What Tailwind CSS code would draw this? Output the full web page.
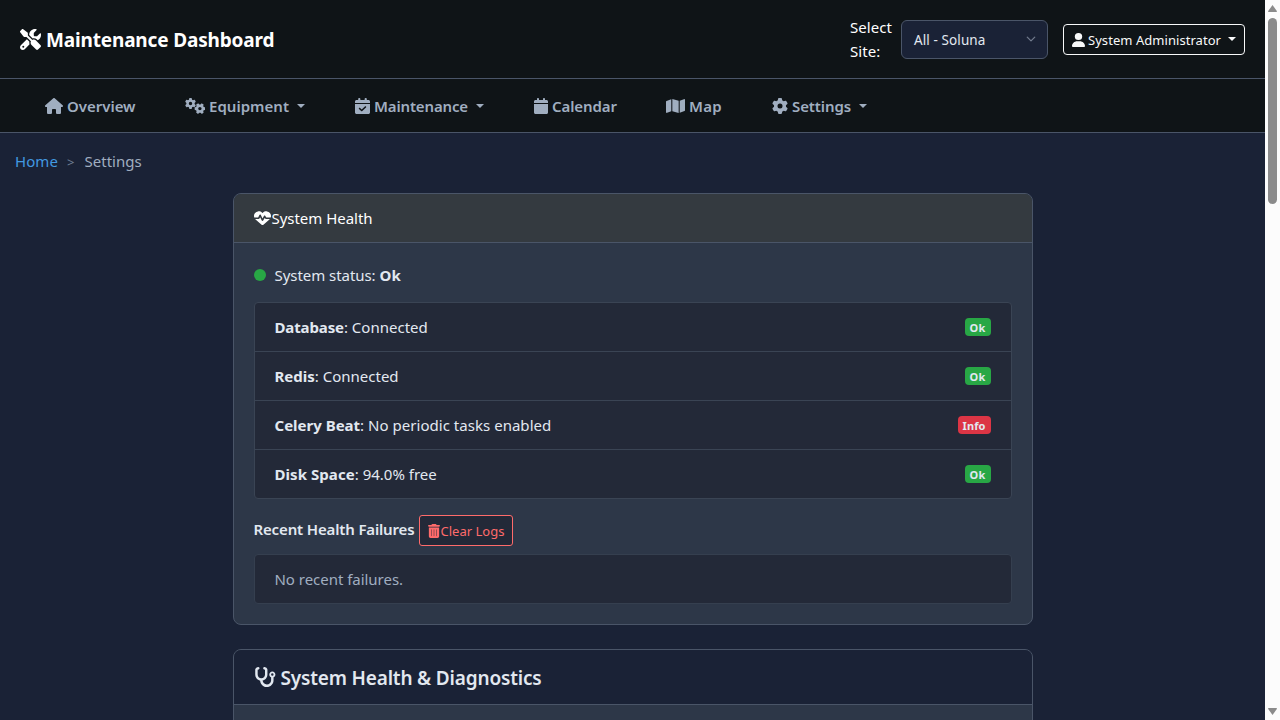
<!DOCTYPE html>
<html lang="en">
<head>
<meta charset="utf-8">
<title>Maintenance Dashboard</title>
<script src="https://cdn.jsdelivr.net/npm/@tailwindcss/browser@4"></script>
</head>
<body class="h-screen overflow-hidden bg-[#1a2236] font-['Noto_Sans','Open_Sans',sans-serif] text-[15px] leading-6 text-[#e2e8f0]">
<svg class="hidden">
  <symbol id="gear" viewBox="0 0 512 512"><path fill-rule="evenodd" d="M495.9 166.6c3.2 8.7 .5 18.4-6.4 24.6l-43.3 39.4c1.1 8.3 1.7 16.8 1.7 25.4s-.6 17.1-1.7 25.4l43.3 39.4c6.9 6.2 9.6 15.9 6.4 24.6c-4.4 11.9-9.7 23.3-15.8 34.3l-4.7 8.1c-6.6 11-14 21.4-22.1 31.2c-5.9 7.2-15.7 9.6-24.5 6.8l-55.7-17.7c-13.4 10.3-28.2 18.9-44 25.4l-12.5 57.1c-2 9.1-9 16.3-18.2 17.8c-13.8 2.3-28 3.5-42.5 3.5s-28.7-1.2-42.5-3.5c-9.2-1.5-16.2-8.7-18.2-17.8l-12.5-57.1c-15.8-6.5-30.6-15.1-44-25.4L83.1 425.9c-8.8 2.8-18.6 .3-24.5-6.8c-8.1-9.8-15.5-20.2-22.1-31.2l-4.7-8.1c-6.1-11-11.4-22.4-15.8-34.3c-3.2-8.7-.5-18.4 6.4-24.6l43.3-39.4C64.6 273.1 64 264.6 64 256s.6-17.1 1.7-25.4L22.4 191.2c-6.9-6.2-9.6-15.9-6.4-24.6c4.4-11.9 9.7-23.3 15.8-34.3l4.7-8.1c6.6-11 14-21.4 22.1-31.2c5.9-7.2 15.7-9.6 24.5-6.8l55.7 17.7c13.4-10.3 28.2-18.9 44-25.4l12.5-57.1c2-9.1 9-16.3 18.2-17.8C227.3 1.2 241.5 0 256 0s28.7 1.2 42.5 3.5c9.2 1.5 16.2 8.7 18.2 17.8l12.5 57.1c15.8 6.5 30.6 15.1 44 25.4l55.7-17.7c8.8-2.8 18.6-.3 24.5 6.8c8.1 9.8 15.5 20.2 22.1 31.2l4.7 8.1c6.1 11 11.4 22.4 15.8 34.3zM256 336a80 80 0 1 0 0-160 80 80 0 1 0 0 160z"/></symbol>
</svg>
<div class="flex h-full">
  <div class="min-w-0 flex-1 overflow-hidden">
    <header class="flex h-[79px] items-center justify-between border-b border-[#4a5568] bg-[#0f1417] pr-5 pl-5">
      <h1 class="flex items-center gap-[5px] text-[19px] font-bold tracking-[-0.16px] text-white">
        <svg class="size-[21px]" viewBox="0 0 512 512" fill="currentColor"><path fill-rule="evenodd" d="M78.6 5C69.1-2.4 55.6-1.5 47 7L7 47c-8.5 8.5-9.4 22-2.1 31.6l80 104c4.5 5.9 11.6 9.4 19 9.4h54.1l109 109c-14.7 29-10 65.4 14.3 89.6l112 112c12.5 12.5 32.8 12.5 45.3 0l64-64c12.5-12.5 12.5-32.8 0-45.3l-112-112c-24.2-24.2-60.6-29-89.6-14.3l-109-109V104c0-7.5-3.5-14.5-9.4-19L78.6 5zM19.9 396.1C7.2 408.8 0 426.1 0 444.1C0 481.6 30.4 512 67.9 512c18 0 35.3-7.2 48-19.9L233.7 374.3c-7.8-20.9-9-43.6-3.6-65.1l-61.7-61.7L19.9 396.1zM512 144c0-10.5-1.1-20.7-3.2-30.5c-2.4-11.2-16.1-14.1-24.2-6l-63.9 63.9c-3 3-7.1 4.7-11.3 4.7H352c-8.8 0-16-7.2-16-16V102.6c0-4.2 1.7-8.3 4.7-11.3l63.9-63.9c8.1-8.1 5.2-21.8-6-24.2C388.7 1.1 378.5 0 368 0C288.5 0 224 64.5 224 144l0 .8 85.3 85.3c36-9.1 75.8 .5 104 28.7L429 274.5c49-23 83-72.8 83-130.5zM56 432a24 24 0 1 1 48 0 24 24 0 1 1 -48 0z"/></svg>
        <span class="pt-[2px]">Maintenance Dashboard</span>
      </h1>
      <div class="flex items-center">
        <label class="w-[51px] tracking-[0.04px] text-white">Select Site:</label>
        <div class="flex h-[39px] w-[147px] items-center justify-between rounded-md border border-[#4a5568] bg-[#1a2236] pr-[11px] pl-3 text-[13px]">
          <span class="pt-[2px] text-[13.5px] tracking-[0.1px]">All - Soluna</span>
          <svg class="size-[10px]" viewBox="0 0 16 16" fill="none" stroke="#717b8d" stroke-width="2" stroke-linecap="round" stroke-linejoin="round"><path d="M2 5l6 6 6-6"/></svg>
        </div>
        <button class="ml-[15px] flex h-[31px] w-[182px] items-center rounded border border-[#f8f9fa] pl-2 text-[13px] text-[#f8f9fa]">
          <svg class="mt-px mr-[3px] h-[14px] w-[13px]" viewBox="0 0 448 512" fill="currentColor" preserveAspectRatio="none"><path d="M224 256A128 128 0 1 0 224 0a128 128 0 1 0 0 256zm-45.7 48C79.8 304 0 383.8 0 482.3C0 498.7 13.3 512 29.7 512H418.3c16.4 0 29.7-13.3 29.7-29.7C448 383.8 368.2 304 269.7 304H178.3z"/></svg>
          <span class="pt-[2px] tracking-[0.05px]">System Administrator</span>
          <i class="ml-[7px] border-x-4 border-t-4 border-x-transparent border-t-current"></i>
        </button>
      </div>
    </header>
    <nav class="flex h-[54px] items-center border-b border-[#4a5568] bg-[#0f1417] pl-[45px] font-semibold text-[#a0aec0]">
      <a class="flex w-[140px] items-center">
        <svg class="mr-1 h-4 w-[18px]" viewBox="0 0 576 512" fill="currentColor"><path d="M575.8 255.5c0 18-15 32.1-32 32.1h-32l.7 160.2c0 2.7-.2 5.4-.5 8.1V472c0 22.1-17.9 40-40 40H456c-1.1 0-2.2 0-3.3-.1c-1.4 .1-2.8 .1-4.2 .1H416 392c-22.1 0-40-17.9-40-40V448 384c0-17.7-14.3-32-32-32H256c-17.7 0-32 14.3-32 32v64 24c0 22.1-17.9 40-40 40H160 128.1c-1.5 0-3-.1-4.5-.2c-1.2 .1-2.4 .2-3.6 .2H104c-22.1 0-40-17.9-40-40V360c0-.9 0-1.9 .1-2.8V287.6H32c-18 0-32-14-32-32.1c0-9 3-17 10-24L266.4 8c7-7 15-8 22-8s15 2 21 7L564.8 231.5c8 7 12 15 11 24z"/></svg>
        <span class="tracking-[-0.02px]">Overview</span>
      </a>
      <a class="flex w-[170px] items-center">
        <svg class="mr-1 h-4 w-5" viewBox="0 0 20 16" fill="currentColor"><use href="#gear" x="0" y="0" width="11" height="11"/><g transform="rotate(90 14.9 10.6)"><use href="#gear" x="9.4" y="5.1" width="11" height="11"/></g></svg>
        <span class="tracking-[0.03px]">Equipment</span>
        <i class="ml-2 border-x-4 border-t-4 border-x-transparent border-t-current"></i>
      </a>
      <a class="flex w-[179px] items-center">
        <svg class="mr-1 h-4 w-[15px]" viewBox="0 0 448 512" fill="currentColor" preserveAspectRatio="none"><path fill-rule="evenodd" d="M96 32V64H48C21.5 64 0 85.5 0 112v48H448V112c0-26.5-21.5-48-48-48H352V32c0-17.7-14.3-32-32-32s-32 14.3-32 32V64H160V32c0-17.7-14.3-32-32-32S96 14.3 96 32zM448 192H0V464c0 26.5 21.5 48 48 48H400c26.5 0 48-21.5 48-48V192zM329 305c9.4-9.4 9.4-24.6 0-33.9s-24.6-9.4-33.9 0l-95 95-47-47c-9.4-9.4-24.6-9.4-33.9 0s-9.4 24.6 0 33.9l64 64c9.4 9.4 24.6 9.4 33.9 0L329 305z"/></svg>
        <span class="tracking-[-0.15px]">Maintenance</span>
        <i class="ml-2 border-x-4 border-t-4 border-x-transparent border-t-current"></i>
      </a>
      <a class="flex w-[132px] items-center">
        <svg class="mr-1 h-4 w-[14px]" viewBox="0 0 448 512" fill="currentColor"><path d="M96 32V64H48C21.5 64 0 85.5 0 112v48H448V112c0-26.5-21.5-48-48-48H352V32c0-17.7-14.3-32-32-32s-32 14.3-32 32V64H160V32c0-17.7-14.3-32-32-32S96 14.3 96 32zM448 192H0V464c0 26.5 21.5 48 48 48H400c26.5 0 48-21.5 48-48V192z"/></svg>
        <span class="tracking-[-0.08px]">Calendar</span>
      </a>
      <a class="flex w-[106px] items-center">
        <svg class="mr-1 h-4 w-[19px]" viewBox="0 0 576 512" fill="currentColor" preserveAspectRatio="none"><path d="M384 476.1L192 421.2V35.9L384 90.8V476.1zm32-1.2V88.4L543.1 37.5c15.8-6.3 32.9 5.3 32.9 22.3V394.6c0 9.8-6 18.6-15.1 22.3L416 474.8zM15.1 95.1L160 37.2V423.6L32.9 474.5C17.1 480.8 0 469.2 0 452.2V117.4c0-9.8 6-18.6 15.1-22.3z"/></svg>
        <span class="tracking-[0.3px]">Map</span>
      </a>
      <a class="flex items-center">
        <svg class="mr-1 size-4" fill="currentColor"><use href="#gear"/></svg>
        <span class="tracking-[-0.1px]">Settings</span>
        <i class="ml-2 border-x-4 border-t-4 border-x-transparent border-t-current"></i>
      </a>
    </nav>
    <div class="flex h-[60px] items-center pb-1 pl-[15px] text-[#a0aec0]">
      <a class="tracking-[0.08px] text-[#4299e1]">Home</a>
      <span class="mr-[10px] ml-[9px] pt-[2px] text-[13px] text-[#718096]">&gt;</span>
      <span class="tracking-[0.04px]">Settings</span>
    </div>
    <main class="mx-auto w-[800px]">
      <section class="overflow-hidden rounded-lg border border-[#4a5568] bg-[#2d3748]">
        <div class="flex h-[49px] items-center border-b border-[#4a5568] bg-[#343a40] px-5 text-white">
          <svg class="mr-[1px] h-4 w-[17px]" viewBox="0 0 512 512" fill="currentColor" preserveAspectRatio="none"><path d="M228.3 469.1L47.6 300.4c-4.2-3.9-8.2-8.1-11.9-12.4h87c22.6 0 43-13.6 51.7-34.5l10.5-25.2 49.3 109.5c3.8 8.5 12.1 14 21.4 14.1s17.8-5 22-13.3L320 253.7l1.7 3.4c9.5 19 28.9 31 50.1 31H476.3c-3.7 4.3-7.7 8.5-11.9 12.4L283.7 469.1c-7.5 7-17.4 10.9-27.7 10.9s-20.2-3.9-27.7-10.9zM503.7 240h-132c-3 0-5.8-1.7-7.2-4.4l-23.2-46.3c-4.1-8.1-12.4-13.3-21.5-13.3s-17.4 5.1-21.5 13.3l-41.4 82.8L205.9 158.2c-3.9-8.7-12.7-14.3-22.2-14.1s-18.1 5.9-21.8 14.8l-31.8 76.3c-1.2 3-4.2 4.9-7.4 4.9H16c-2.6 0-5 .4-7.3 1.1C3 225.2 0 208.2 0 190.9v-5.8c0-69.9 50.5-129.5 119.4-141C165 36.5 211.4 51.4 244 84l12 12 12-12c32.6-32.6 79-47.5 124.6-39.9C461.5 55.6 512 115.2 512 185.1v5.8c0 16.9-2.8 33.5-8.3 49.1z"/></svg>
          <span class="tracking-[-0.03px]">System Health</span>
        </div>
        <div class="p-5">
          <div class="flex h-6 items-center whitespace-pre">
            <i class="mr-[9px] size-3 rounded-full bg-[#28a745]"></i>
            <span class="tracking-[-0.05px]">System status: </span><strong class="tracking-[0.2px]">Ok</strong>
          </div>
          <ul class="mt-[15px] divide-y divide-[#3a4454] rounded border border-[#3a4454] bg-[#232938]">
            <li class="flex h-[49px] items-center justify-between px-5"><span><strong class="tracking-[-0.12px]">Database</strong>: Connected</span><b class="h-[18px] rounded bg-[#28a745] px-[5px] text-[11px] leading-[19px] tracking-[0.2px]">Ok</b></li>
            <li class="flex h-[49px] items-center justify-between px-5"><span><strong>Redis</strong>: Connected</span><b class="h-[18px] rounded bg-[#28a745] px-[5px] text-[11px] leading-[19px] tracking-[0.2px]">Ok</b></li>
            <li class="flex h-[49px] items-center justify-between px-5"><span class="tracking-[0.03px]"><strong class="tracking-normal">Celery Beat</strong>: No periodic tasks enabled</span><b class="h-[18px] rounded bg-[#dc3545] px-[5px] text-[11px] leading-[19px] tracking-[0.1px]">Info</b></li>
            <li class="flex h-12 items-center justify-between px-5"><span><strong class="tracking-[0.06px]">Disk Space</strong>: 94.0% free</span><b class="h-[18px] rounded bg-[#28a745] px-[5px] text-[11px] leading-[19px] tracking-[0.2px]">Ok</b></li>
          </ul>
          <div class="mt-4 flex h-[31px] items-center">
            <h2 class="mr-[5px] pb-1 font-semibold tracking-[-0.15px]">Recent Health Failures</h2>
            <button class="flex h-[31px] w-[94px] items-center rounded-[3px] border border-[#ff6b6b] bg-[#232938] pl-2 text-[13px] text-[#ff6b6b]">
              <svg class="h-[14px] w-3" viewBox="0 0 448 512" fill="currentColor" preserveAspectRatio="none"><path fill-opacity=".45" d="M64 160h320v320H64z"/><path fill-rule="evenodd" d="M135.2 17.7C140.6 6.8 151.7 0 163.8 0H284.2c12.1 0 23.2 6.8 28.6 17.7L320 32h96c17.7 0 32 14.3 32 32s-14.3 32-32 32H32C14.3 96 0 81.7 0 64S14.3 32 32 32h96l7.2-14.3zM32 128H416V448c0 35.3-28.7 64-64 64H96c-35.3 0-64-28.7-64-64V128zm96 64c-8.800 0-16 7.200-16 16V432c0 8.800 7.200 16 16 16s16-7.200 16-16V208c0-8.800-7.200-16-16-16zm96 0c-8.800 0-16 7.200-16 16V432c0 8.800 7.200 16 16 16s16-7.200 16-16V208c0-8.800-7.200-16-16-16zm96 0c-8.800 0-16 7.200-16 16V432c0 8.800 7.200 16 16 16s16-7.200 16-16V208c0-8.800-7.200-16-16-16z"/></svg>
              <span class="tracking-[0.02px]">Clear Logs</span>
            </button>
          </div>
          <div class="mt-2 flex h-[50px] items-center rounded border border-[#353f4f] bg-[#232938] px-5 tracking-[-0.03px] text-[#a0aec0]">No recent failures.</div>
        </div>
      </section>
      <section class="mt-6 h-[300px] overflow-hidden rounded-lg border border-[#4a5568] bg-[#2d3748]">
        <h2 class="flex h-[55px] items-center border-b border-[#4a5568] bg-[#1a2236] px-5 text-[19px] font-semibold tracking-[-0.17px]">
          <svg class="mr-[5px] h-5 w-[22px]" viewBox="0 0 576 512" fill="currentColor" preserveAspectRatio="none"><path fill-rule="evenodd" d="M142.4 21.9c5.600 16.800-3.500 34.900-20.200 40.500L96 71.100V192c0 53 43 96 96 96s96-43 96-96V71.100l-26.100-8.700c-16.800-5.600-25.800-23.700-20.200-40.500s23.700-25.800 40.500-20.200l26.100 8.700C334.400 19.100 352 43.500 352 71.100V192c0 77.200-54.600 141.600-127.300 156.700C231 404.600 278.400 448 336 448c61.900 0 112-50.100 112-112V265.300c-28.300-12.300-48-40.500-48-73.300c0-44.200 35.800-80 80-80s80 35.800 80 80c0 32.800-19.700 61-48 73.300V336c0 97.200-78.800 176-176 176c-92.900 0-168.900-71.900-175.500-163.100C87.200 334.200 32 269.600 32 192V71.100c0-27.500 17.600-52 43.800-60.700l26.100-8.700c16.800-5.600 34.900 3.500 40.500 20.200zM480 224a32 32 0 1 0 0-64 32 32 0 1 0 0 64z"/></svg>
          <span class="pt-[2px]">System Health &amp; Diagnostics</span>
        </h2>
      </section>
    </main>
  </div>
  <div class="flex w-[15px] flex-col items-center bg-[#fcfcfc] pt-[5px] pb-[5px]">
    <svg class="h-[7px] w-[9px]" viewBox="0 0 9 7" fill="#8b8b8b"><path d="M4.500 0L9 6.200Q9 7 8.200 7H.8Q0 7 0 6.200z"/></svg>
    <div class="mt-[6px] h-[186px] w-[9px] rounded-full bg-[#8b8b8b]"></div>
    <svg class="mt-auto h-[7px] w-[9px] rotate-180" viewBox="0 0 9 7" fill="#8b8b8b"><path d="M4.500 0L9 6.200Q9 7 8.200 7H.8Q0 7 0 6.200z"/></svg>
  </div>
</div>
</body>
</html>
